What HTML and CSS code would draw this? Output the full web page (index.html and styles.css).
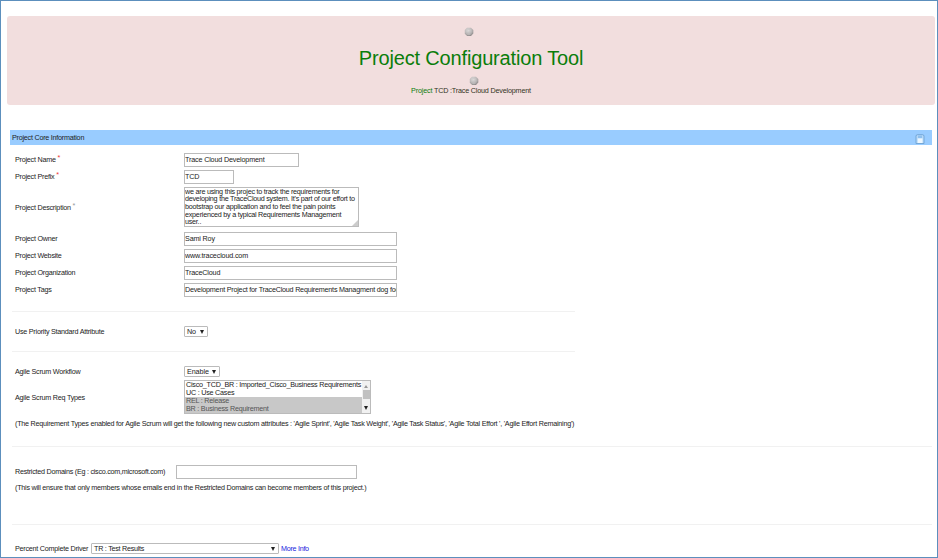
FILE: index.html
```html
<!DOCTYPE html>
<html lang="en">
<head>
<meta charset="utf-8">
<title>Project Configuration Tool</title>
<link rel="stylesheet" href="styles.css">
</head>
<body>
<div class="page">
  <header class="hero">
    <svg class="gear" viewBox="0 0 10 10"><use href="#knob"/></svg>
    <h1>Project Configuration Tool</h1>
    <svg class="gear gear-low" viewBox="0 0 10 10">
      <defs>
        <radialGradient id="shade" cx=".4" cy=".3" r=".7"><stop offset="0" stop-color="#dedcdc"/><stop offset=".65" stop-color="#b8b5b5"/><stop offset="1" stop-color="#918d8d"/></radialGradient>
        <g id="knob"><path d="M3 .8h4L9.3 3v3.6L7 9H3.2L.8 6.7V3z" fill="url(#shade)"/><path d="M3 3.2l2-.8 2 .8M3.4 7.2h3" stroke="#c9c6c6" stroke-width=".7" fill="none"/></g>
      </defs>
      <use href="#knob"/>
    </svg>
    <p class="project"><span class="green">Project</span> TCD :Trace Cloud Development</p>
  </header>
  <div class="bar"><span>Project Core Information</span>
    <svg class="save" viewBox="0 0 10 10"><path d="M1 9.5V2.2Q1 .7 2.5.7h5Q9 .7 9 2.2v7.3z" fill="#b5d9fa" stroke="#6fa3d2" stroke-width=".9"/><path d="M3 1.5h4v2.7H3z" fill="#8fc0ee"/><path d="M2.7 4.4h4.8v4.6H2.7z" fill="#edf7ff"/></svg>
  </div>
  <main class="form">
    <div class="row"><label>Project Name <i class="req">*</i></label><div class="input w115">Trace Cloud Development</div></div>
    <div class="row"><label>Project Prefix <i class="req">*</i></label><div class="input w50">TCD</div></div>
    <div class="row row-area"><label>Project Description <i class="req dim">*</i></label><div class="area"><div>we are using this projec to track the requirements for</div><div>developing the TraceCloud system. It's part of our effort to</div><div>bootstrap our application and to feel the pain points</div><div>experienced by a typical Requirements Management</div><div>user..</div><svg class="grip" viewBox="0 0 6 6"><path d="M6 0v6H0z" fill="#ccc"/></svg></div></div>
    <div class="row"><label>Project Owner</label><div class="input w213">Sami Roy</div></div>
    <div class="row"><label>Project Website</label><div class="input w213">www.tracecloud.com</div></div>
    <div class="row"><label>Project Organization</label><div class="input w213">TraceCloud</div></div>
    <div class="row"><label>Project Tags</label><div class="input w213 tags">Development Project for TraceCloud Requirements Managment dog foo</div></div>
    <hr class="short first">
    <div class="row row-priority"><label>Use Priority Standard Attribute</label><div class="select w24">No<b class="down"></b></div></div>
    <hr class="short">
    <div class="row row-flow"><label>Agile Scrum Workflow</label><div class="select w36">Enable<b class="down"></b></div></div>
    <div class="row row-list"><label>Agile Scrum Req Types</label>
      <div class="list"><div class="options"><div>Cisco_TCD_BR : Imported_Cisco_Business Requirements</div><div>UC : Use Cases</div><div class="on">REL : Release</div><div class="on">BR : Business Requirement</div></div>
        <div class="scroll"><b class="up"></b><span class="thumb"></span><b class="down"></b></div></div></div>
    <p class="agile">(The Requirement Types enabled for Agile Scrum will get the following new custom attributes : 'Agile Sprint', 'Agile Task Weight', 'Agile Task Status', 'Agile Total Effort ', 'Agile Effort Remaining')</p>
    <hr class="wide">
    <div class="row row-domains"><label>Restricted Domains (Eg : cisco.com,microsoft.com)</label><div class="input w180"></div></div>
    <p class="domains">(This will ensure that only members whose emails end in the Restricted Domains can become members of this project.)</p>
    <hr class="wide">
    <div class="row row-driver"><label>Percent Complete Driver</label><div class="select w187">TR : Test Results<b class="down"></b></div><a>More Info</a></div>
  </main>
</div>
</body>
</html>
```
FILE: styles.css
```css
* { box-sizing: border-box; }
body { margin: 0; background: #fff; }
.page {
  width: 938px; height: 558px; overflow: hidden;
  border: 1px solid #5c8fbd;
  padding: 15px 2px 0 6px;
  font: 7.2px/8px "Liberation Sans", Arial, sans-serif; letter-spacing: -.24px; color: #222;
}
.hero {
  width: 928px; height: 89px; padding-top: 11px; border-radius: 3px;
  background: #f2dede; display: flex; flex-direction: column; align-items: center;
}
.gear { width: 10px; height: 10px; margin-right: 4px; flex: none; }
.gear-low { margin: 5px 0 0 6px; }
h1 { margin: 9px 0 1px; font-weight: 400; font-size: 20px; letter-spacing: -.16px; line-height: 24px; color: #0a7d0a; white-space: nowrap; }
p { margin: 0; white-space: nowrap; }
.project { margin-top: 1px; color: #332; letter-spacing: -.18px; }
.green { color: #0a7d0a; }
.bar {
  width: 922px; height: 15px; margin: 25px 0 0 3px; padding: 0 7px 0 2px;
  background: #9cf; display: flex; align-items: center; justify-content: space-between;
}
.save { width: 10px; height: 10px; margin-top: 2px; }
.form { padding: 8px 0 0 8px; }
.row { display: flex; align-items: center; height: 13px; margin-bottom: 4px; white-space: nowrap; }
label { width: 169px; flex: none; }
.req { color: #e33; font-style: normal; position: relative; top: -2px; }
.dim { color: #999; }
.input { height: 14px; border: 1px solid #bbb; line-height: 12px; overflow: hidden; flex: none; letter-spacing: -.16px; }
.tags { letter-spacing: -.22px; }
.w115 { width: 115px; } .w50 { width: 50px; } .w213 { width: 213px; } .w180 { width: 181px; }
.row-area { height: 40px; margin-bottom: 5px; }
.row-area label { padding-top: 2px; }
.area { width: 175px; height: 40px; border: 1px solid #bbb; line-height: 7.7px; letter-spacing: -.24px; overflow: hidden; position: relative; }
.area div:first-child { margin-top: -.5px; }
.grip { position: absolute; right: 0; bottom: 0; width: 6px; height: 6px; }
hr { border: 0; height: 1px; background: #f1f1f1; margin: 0 0 0 -3px; }
.short { width: 563px; } .wide { width: 920px; }
.first { margin-top: 15px; }
.row-priority { height: 11px; margin: 14px 0; }
.select { height: 11px; border: 1px solid #bbb; padding: 0 3px 0 2px; display: flex; align-items: center; justify-content: space-between; flex: none; border-radius: 1px; letter-spacing: -.1px; }
.w24 { width: 24px; } .w36 { width: 36px; } .w187 { width: 188px; letter-spacing: -.26px; }
.down, .up { width: 0; height: 0; border: 2px solid transparent; border-bottom: 0; border-top: 4px solid #222; }
.up { border-top: 0; border-bottom: 3px solid #999; }
.row-flow { height: 11px; margin: 14px 0 3px; }
.row-list { height: 34px; margin: 0; }
.row-list label { padding-top: 1px; }
.list { width: 187px; height: 34px; border: 1px solid #bbb; display: flex; overflow: hidden; letter-spacing: -.23px; }
.options { width: 177px; line-height: 7.6px; }
.options div { padding-left: 1px; height: 8.1px; }
.options .on { background: #c8c8c8; color: #555; }
.scroll { flex: 1; background: #f1f1f1; display: flex; flex-direction: column; align-items: center; justify-content: space-between; padding: 4px 0 3px; }
.thumb { width: 7px; height: 9px; background: #c1c1c1; margin-bottom: 5px; }
.agile { margin: 6px 0 18px; }
.row-domains { margin: 18px 0 0; height: 14px; }
.row-domains label { width: 161px; letter-spacing: -.26px; }
.domains { margin: 5px 0 32px; }
.row-driver { height: 11px; margin: 18px 0 0; }
.row-driver label { width: 76px; }
.row-driver a { color: #22d; margin-left: 2px; letter-spacing: -.28px; }
```
